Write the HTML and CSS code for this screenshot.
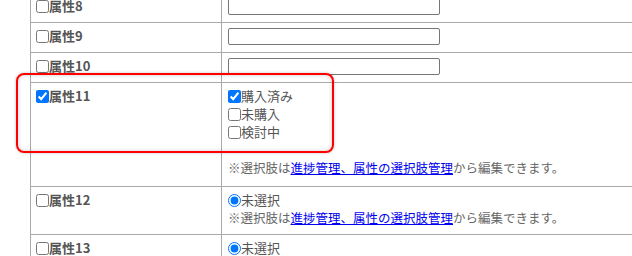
FILE: index.html
```html
<!DOCTYPE html>
<html lang="ja">
<head>
    <meta charset="UTF-8">
    <title>属性</title>
    <link rel="stylesheet" href="styles.css">
</head>
<body>
    <div class="wrap">
        <table class="attr">
            <tr>
                <th><label><input type="checkbox">属性8</label></th>
                <td><input type="text" class="txt"></td>
            </tr>
            <tr>
                <th><label><input type="checkbox">属性9</label></th>
                <td><input type="text" class="txt"></td>
            </tr>
            <tr>
                <th><label><input type="checkbox">属性10</label></th>
                <td><input type="text" class="txt"></td>
            </tr>
            <tr>
                <th><label><input type="checkbox" checked>属性11</label></th>
                <td>
                    <label class="opt"><input type="checkbox" checked>購入済み</label>
                    <label class="opt"><input type="checkbox">未購入</label>
                    <label class="opt"><input type="checkbox">検討中</label>
                    <div class="gap"></div>
                    <p class="note last">※選択肢は<a href="#">進捗管理、属性の選択肢管理</a>から編集できます。</p>
                </td>
            </tr>
            <tr>
                <th><label><input type="checkbox">属性12</label></th>
                <td>
                    <label class="opt"><input type="radio" name="a12" checked>未選択</label>
                    <p class="note">※選択肢は<a href="#">進捗管理、属性の選択肢管理</a>から編集できます。</p>
                </td>
            </tr>
            <tr>
                <th><label><input type="checkbox">属性13</label></th>
                <td>
                    <label class="opt"><input type="radio" name="a13" checked>未選択</label>
                    <p class="note">※選択肢は<a href="#">進捗管理、属性の選択肢管理</a>から編集できます。</p>
                </td>
            </tr>
        </table>
        <!-- highlight -->
        <div class="mark"></div>
    </div>
</body>
</html>
```

FILE: styles.css
```css
* , *::after , *::before{
    box-sizing: border-box;
}
html , body {
    margin: 0;
    padding: 0;
    background: #fff;
    overflow: hidden;
}
body{
    font-family: "Noto Sans CJK JP", "Noto Sans", sans-serif;
    font-size: 13px;
    line-height: 18px;
    color: #555;
}
.wrap{
    position: relative;
    margin-top: -8px;
    padding-left: 30px;
}
.attr{
    border-collapse: collapse;
    width: 700px;
}
.attr th , .attr td{
    border: 1px solid #aaa;
    padding: 4px 6px 7px 6px;
    vertical-align: top;
    text-align: left;
}
.attr th{
    width: 191px;
    padding-left: 5px;
    font-weight: bold;
    color: #555;
}
.attr td{
    border-right: none;
}
.attr tr:last-child th , .attr tr:last-child td{
    border-bottom: none;
}
label{
    display: flex;
    align-items: center;
    height: 18px;
}
input[type="checkbox"] , input[type="radio"]{
    margin: 0;
    width: 13px;
    height: 13px;
}
.txt{
    display: block;
    width: 212px;
    height: 17px;
    margin: 1px 0 0 0;
    border: 1px solid #767676;
    border-radius: 2px;
    padding: 0 2px;
}
.opt{
    font-weight: normal;
}
.gap{
    height: 18px;
}
.note{
    margin: 0;
    font-size: 12.5px;
    color: #666;
}
.note.last{
    margin-bottom: 2px;
}
.note a{
    color: #0000ee;
}
.mark{
    position: absolute;
    left: 16px;
    top: 81px;
    width: 318px;
    height: 80px;
    border: 2px solid #f00;
    border-radius: 8px;
    box-shadow: 0 0 3px rgba(0,0,0,0.25), inset 0 0 4px rgba(0,0,0,0.2);
}
```
